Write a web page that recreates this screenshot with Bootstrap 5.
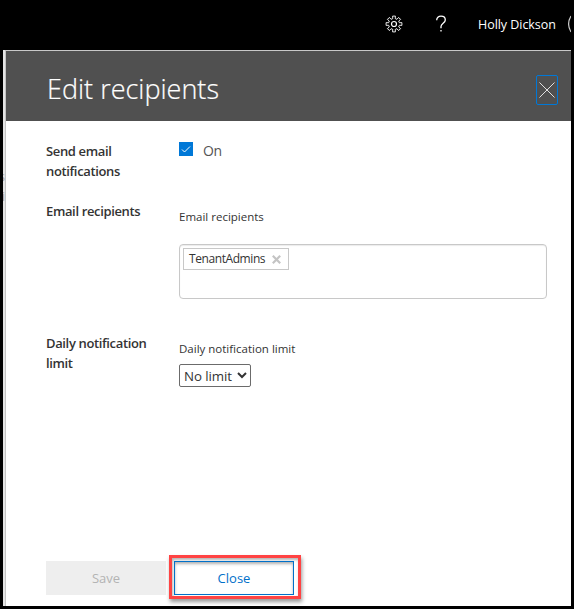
<!DOCTYPE html>
<html lang="en">
<head>
<meta charset="utf-8">
<meta name="viewport" content="width=device-width, initial-scale=1">
<title>Edit recipients</title>
<link href="https://cdn.jsdelivr.net/npm/bootstrap@5.3.0/dist/css/bootstrap.min.css" rel="stylesheet">
<style>
html, body { height: 100%; }
body { background: #000; color: #333; font-family: "Open Sans", "Noto Sans", sans-serif; font-size: 12px; line-height: 20px; overflow: hidden; }
.app-shell { height: 609px; padding: 0 3px 3px; }
.suite-bar { height: 50px; color: #fff; padding: 0 0 2px 382px; }
.suite-bar .suite-icon { width: 18px; height: 18px; }
.help-icon { margin-left: 29px; }
.user-name { margin: 2px 0 0 28px; width: 79px; font-size: 12.5px; letter-spacing: -.05px; }
.avatar-clip { width: 3px; height: 20px; margin-left: 11px; }
.page-edge { width: 3px; background: #e4e4e4; border-right: 1px solid #c3c3c3; color: #a2a2a2; font-size: 12px; direction: rtl; padding-top: 117px; }
.edit-panel { background: #fff; border-top: 1px solid #c8c8c8; }
.panel-head { height: 70px; background: #505050; color: #fff; padding: 0 13px 0 41px; }
.panel-title { font-size: 27px; font-weight: 300; line-height: 36px; letter-spacing: 0; margin-top: 5px; -webkit-text-stroke: .2px #fff; }
.panel-close { width: 22px; height: 30px; border: 1px solid #0078d7; border-radius: 2px; margin-top: 7px; }
.panel-main { padding: 0 24px 0 40px; }
.field-row { display: grid; grid-template-columns: 133px 368px; }
.row-switch { padding-top: 20px; height: 80px; }
.row-recipients { height: 132px; }
.field-name { font-weight: 600; font-size: 13px; letter-spacing: -.36px; }
.check-box { width: 14px; height: 14px; background: #0078d7; margin-top: 1px; }
.check-text { font-size: 14px; margin-left: 10px; letter-spacing: -.4px; color: #555; }
.field-caption { font-size: 11.5px; letter-spacing: 0; padding-top: 6px; }
.token-box { height: 55px; margin-top: 17px; padding: 3px; border: 1px solid #c8c8c8; border-radius: 4px; box-shadow: inset 0 1px 1px rgba(0,0,0,.08); }
.token { height: 22px; width: 106px; border: 1px solid #c8c8c8; padding: 0 7px 0 5px; font-size: 12px; letter-spacing: -.42px; }
.limit-wrap { width: 72px; height: 23px; margin-top: 5px; }
.limit-select { appearance: none; border: 1px solid #6b6b6b; border-radius: 2px; background: #fff; color: #333; padding: 0 0 0 4px; font-size: 13.3px; letter-spacing: -.1px; line-height: 20px; }
.limit-arrow { right: 4px; top: 8px; pointer-events: none; }
.panel-foot { padding: 0 0 7px 40px; }
.foot-btn { --bs-btn-border-radius: 0; --bs-btn-padding-y: 0; --bs-btn-font-size: 13px; width: 120px; height: 34px; line-height: 32px; }
.btn-save { --bs-btn-disabled-bg: #eee; --bs-btn-disabled-border-color: #eee; --bs-btn-disabled-color: #b3b3b3; --bs-btn-disabled-opacity: 1; margin-top: 6px; }
.btn-close-panel { --bs-btn-bg: #fff; --bs-btn-border-color: #0070c9; --bs-btn-color: #0070c9; box-shadow: inset 0 2px 3px rgba(0,0,0,.3); }
.callout-frame { border: 3px solid #ff4343; padding: 3px 4px 1px 2px; margin-left: 3px; box-shadow: 1px 3px 4px rgba(0,0,0,.4), inset 1px 2px 3px rgba(0,0,0,.3); }
</style>
</head>
<body>
<div class="app-shell d-flex flex-column">
  <header class="suite-bar d-flex align-items-center flex-shrink-0">
    <svg class="suite-icon flex-shrink-0" viewBox="0 0 18 18" fill="none" stroke="#fff" stroke-width=".9">
      <path id="tooth" d="M6.900 3.920L7.760 3.640 7.600 1.100H10.400L10.240 3.640 11.100 3.920"/>
      <use href="#tooth" transform="rotate(45 9 9)"/><use href="#tooth" transform="rotate(90 9 9)"/><use href="#tooth" transform="rotate(135 9 9)"/><use href="#tooth" transform="rotate(180 9 9)"/><use href="#tooth" transform="rotate(225 9 9)"/><use href="#tooth" transform="rotate(270 9 9)"/><use href="#tooth" transform="rotate(315 9 9)"/>
      <circle cx="9" cy="9" r="2.500" stroke-width="1.200"/>
    </svg>
    <svg class="suite-icon help-icon flex-shrink-0" viewBox="0 0 18 18" fill="none" stroke="#fff" stroke-width="1.300"><path d="M4.700 5.200C4.700 2.700 6.500 1.200 9 1.200s4.300 1.500 4.300 3.700C13.300 8 9 8.500 9 11.500v1.700M9 15v1.600"/></svg>
    <span class="user-name text-nowrap flex-shrink-0">Holly Dickson</span>
    <svg class="avatar-clip flex-shrink-0" viewBox="0 0 3 20" fill="none" stroke="#ccc" stroke-width="1.200"><path d="M3 2C0 7 0 13 3 18"/></svg>
  </header>
  <div class="d-flex flex-grow-1">
    <div class="page-edge overflow-hidden flex-shrink-0">s<br>i</div>
    <section class="edit-panel d-flex flex-column flex-grow-1">
      <div class="panel-head d-flex align-items-center justify-content-between">
        <h1 class="panel-title mb-0">Edit recipients</h1>
        <button class="panel-close btn p-0 d-flex align-items-center justify-content-center" aria-label="Close panel">
          <svg width="18" height="18" viewBox="0 0 18 18" stroke="#e0e0e0" stroke-width="1"><path d="M1.500 1.500l15 15M16.500 1.500l-15 15"/></svg>
        </button>
      </div>
      <div class="panel-main flex-grow-1">
        <div class="field-row row-switch">
          <div class="field-name">Send email<br>notifications</div>
          <div class="d-flex align-items-start">
            <span class="check-box d-flex" role="checkbox" aria-checked="true"><svg width="14" height="14" viewBox="0 0 14 14" fill="none" stroke="#fff"><path d="M3 7.500l2.500 2.500 5.500-5.500"/></svg></span>
            <span class="check-text">On</span>
          </div>
        </div>
        <div class="field-row row-recipients">
          <div class="field-name">Email recipients</div>
          <div>
            <div class="field-caption">Email recipients</div>
            <div class="token-box">
              <div class="token d-flex align-items-center justify-content-between"><span>TenantAdmins</span><svg width="9" height="9" viewBox="0 0 9 9" stroke="#c4c4c4" stroke-width="2.200"><path d="M.8.8l7.400 7.400M8.200.8L.8 8.200"/></svg></div>
            </div>
          </div>
        </div>
        <div class="field-row">
          <div class="field-name">Daily notification<br>limit</div>
          <div>
            <div class="field-caption">Daily notification limit</div>
            <div class="limit-wrap position-relative">
              <select class="limit-select w-100 h-100 d-block" aria-label="Daily notification limit"><option>No limit</option></select>
              <svg class="limit-arrow position-absolute" width="10" height="7" viewBox="0 0 10 7" fill="none" stroke="#333" stroke-width="2"><path d="M1 1l4 4 4-4"/></svg>
            </div>
          </div>
        </div>
      </div>
      <div class="panel-foot d-flex align-items-start">
        <button class="btn foot-btn btn-save" disabled>Save</button>
        <div class="callout-frame"><button class="btn foot-btn btn-close-panel d-block">Close</button></div>
      </div>
    </section>
  </div>
</div>
<script src="https://cdn.jsdelivr.net/npm/bootstrap@5.3.0/dist/js/bootstrap.bundle.min.js"></script>
</body>
</html>
